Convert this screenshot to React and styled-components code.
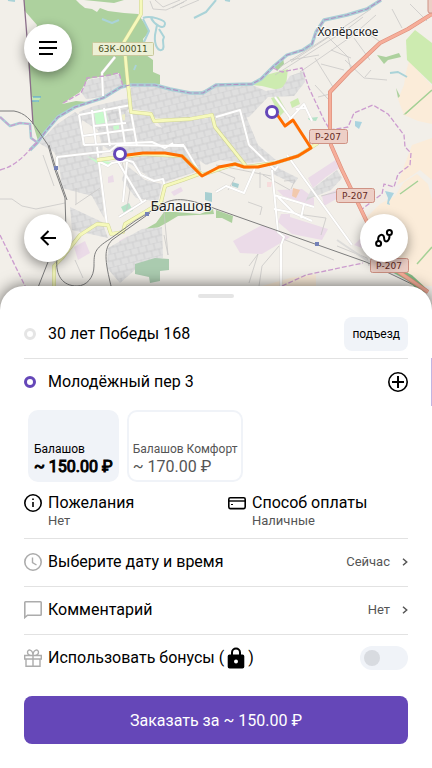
import React from "react";
import styled, { createGlobalStyle } from "styled-components";

const GlobalStyle = createGlobalStyle`
  * {
    box-sizing: border-box;
  }
  body {
    margin: 0;
    background: #fff;
    font-family: Roboto, "Noto Sans", sans-serif;
    color: #000;
  }
  button {
    font: inherit;
    color: inherit;
    cursor: pointer;
  }
`;

const forest = [
  "M24 0H76L80 4L85 8L92 9L97 12L100 8L108 11L124 13L138 14L147 27L149 32L143 39L146 55L153 60L153 72L160 75L160 84L122 86L119 73L108 77L104 76L88 79L85 84L80 92L62 104L76 101L88 102L72 108L58 117L46 131L38 141L33 124L28 58L37 25L24 10Z",
  "M84 0H124L114 3Z",
];

const meadow = [
  "M406 40L415 30L432 43V84L407 60Z",
  "M252 85L266 75L288 69L286 85L278 90L262 86Z",
  "M271 98L278 96L286 110L280 116Z",
  "M290 102L298 98L300 104L292 108Z",
];

const woods = [
  "M274 66L283 57L284 64L277 71Z",
  "M377 55L386 57L399 53L401 57L388 60L384 64Z",
  "M142 231L156 223L164 212L175 212L200 214L213 209L214 214L178 216L168 222L159 227L145 234Z",
  "M216 210L233 216L232 223L222 218L216 218Z",
  "M396 88L400 96L398 98ZM403 115L432 90L406 114Z",
];

const farmland = [
  "M409 61L432 86V124L418 121L404 115L398 99L404 85L406 72Z",
  "M412 145L432 138V180L420 170L404 181L397 185Z",
  "M404 182L417 174L428 184L432 200V286H412L388 268L372 242L364 220L380 204L395 196Z",
  "M262 286L290 278L316 274V290H250Z",
];

const industry = [
  "M308 178L337 159L339 168L326 177L313 188Z",
  "M322 196L336 190L338 198L324 206Z",
  "M233 241L262 225L290 237L284 241L262 254L240 253Z",
  "M290 217L328 229L322 240L292 234L278 222L281 214L290 214Z",
  "M277 190L302 189L314 198L314 206L283 196Z",
  "M74 247L85 241L90 253L78 260Z",
  "M119 241L128 236L134 247L123 253Z",
  "M108 177L113 175L114 182L108 183Z",
  "M171 192L181 187L183 191L174 196Z",
  "M354 245L361 238L362 248Z",
];

const town = [
  "M88 80L119 74L123 86L103 97L86 99L81 92Z",
  "M131 87L156 86L190 95L216 86L252 85L266 91L282 88L290 76L304 71L305 82L294 96L268 97L249 117L232 120L216 116L209 118L155 118L150 111L131 109Z",
  "M79 112L94 106L130 98L131 106L120 120L98 130L82 120Z",
  "M75 112L82 117L82 145L103 145L102 155L58 160L54 152L39 143L56 125Z",
  "M120 106L130 113L150 116L156 126L170 130L180 143L198 150L201 170L165 182L150 178L125 160L102 145L95 120Z",
  "M157 122L210 118L243 109L258 145L276 160L249 163L220 160L206 165L184 150L166 132Z",
  "M58 157L98 155L104 218L92 196L62 188Z",
  "M126 165L145 180L162 184L158 202L136 198L122 180Z",
  "M70 207L102 222L108 238L72 230Z",
  "M108 248L142 229L162 227L163 258L144 262L120 283L107 268Z",
  "M272 165L298 178L294 184L271 173Z",
  "M305 202L311 190L337 170L342 178L331 190L311 198Z",
];

const parks = [
  ["M94 110L106 109L108 122L96 125Z", "#c8facc"],
  ["M87 156L96 160L111 162L111 166L98 164Z", "#c8facc"],
  ["M113 126L119 124L119 129L114 130Z", "#c8facc"],
  ["M121 207L129 203L133 211L124 213Z", "#b5e3c8"],
  ["M308 118L318 117L316 121L309 120Z", "#b5e3c8"],
  ["M135 264L155 258L169 259V270L160 271V281L150 283L149 277L135 274Z", "#aacbaf"],
  ["M121 115L125 114L125 120L121 121Z", "#eeeeca"],
  ["M293 188L300 190L296 198L292 196Z", "#f2c9ad"],
  ["M267 182L272 182L271 187L267 187Z", "#f7dcdc"],
  ["M205 192L212 193L212 202L205 200Z", "#a8cfd1"],
  ["M232 182L239 184L238 188L232 186Z", "#a8cfd1"],
  ["M385 191L394 193L389 202L390 205L387 204L388 198Z", "#aad3df"],
  ["M355 121L362 122L359 129L355 126Z", "#aad3df"],
  ["M32 97L41 97L38 102L32 101Z", "#c6e8b4"],
];

const water = [
  "M143 18C150 15 166 20 165 24C164 31 154 24 151 18M157 25L155 35C154 46 159 53 163 49C165 44 161 42 164 37L159 29M143 19L149 31L144 42L138 56",
  "M102 19L112 23L119 20M194 18L206 12L216 0M134 70L136 65M390 73L398 72L407 77M8 0L15 1M225 0L230 1",
];

const lanes = [
  "M150 1L153 9L166 10L184 2M172 8L187 0M155 0L163 7L180 0M180 8L199 0",
  "M275 75L346 30L363 17M280 67L334 33M290 60L319 55M291 62L371 9M300 72L352 36L376 15M315 58L333 87M331 50L351 58M344 70L321 64M315 85L328 99M326 35L348 57L351 70M345 60L364 78L387 80M392 9L402 28M410 4L427 21M365 77L371 70M360 28L382 43M354 38L370 60M318 97L330 94",
  "M0 199L12 199L22 206L36 209L65 203M43 155L54 186M75 205L100 188M76 188L76 204M122 162L130 190L126 213M163 201L168 255L164 235M75 260L83 278",
  "M216 165L271 176M248 202L262 207L260 215M263 175L290 190M283 239L334 260M297 214L326 218L321 235M249 266L258 254L249 283M279 246L262 266L259 286M337 246L367 258L369 266",
  "M284 181L295 180L291 189M216 170L235 178L228 190M321 196L344 190M260 172V188",
];

const whiteRoads = [
  "M115 57L102 73L103 96M79 115L131 105M79 115L84 145M82 136L135 129M92 110L96 145M104 108L110 146M119 106L125 144M131 112L137 146M84 145L152 142L165 148L173 143M94 126L126 123",
  "M57 157L110 151L117 145L184 146L200 173M57 157L57 173M97 147L107 225M117 160L142 202M119 158L133 162L141 175L154 181L163 179L165 187M98 161L108 166L112 163L128 160M119 217L146 200M184 145L170 145M127 162L123 202",
  "M216 117L240 110L249 145M275 97L310 145M289 120L304 104L312 121M296 109L306 108M216 192L226 186L244 193L255 168M249 145L275 170L278 166M272 170L278 232L284 237L281 245V286M274 195L314 207M274 209L294 213L312 221M278 197L294 213M304 204L301 218M287 155L352 245",
];

const yellowRoads = [
  "M141 0V14L124 42L127 75L131 112L151 114L154 121L190 119L212 115L215 127L246 166",
  "M202 173L183 180L165 186L161 202L145 212L125 224L123 232L111 234L108 225L97 224L80 235L62 258L54 266V290",
  "M97 160L143 154L182 156L202 175L235 164L246 167L275 163L298 156L318 143",
];

const rails = [
  "M0 111L14 111C25 113 31 120 37 129L48 145L55 170L65 198L66 230M49 145L56 169L67 200",
  "M216 209C190 199 175 196 161 205L135 221L110 239C94 249 94 253 94 266C94 277 87 286 77 286C63 286 55 276 57 258M150 213L112 240C104 249 104 258 112 290M48 262L37 290",
  "M216 209L366 262L420 288",
];

const borders = [
  "M0 170C16 166 24 156 37 142",
  "M0 117L10 126L20 123L30 124L31 138L38 143",
  "M63 103L81 93L85 84L87 78L104 76L119 73L123 86",
  "M273 68L282 72L302 68L309 88L324 120L330 130L348 127L354 113L373 105L388 114L404 135L405 147L411 153L410 165L398 174L394 187L384 184L382 194L362 209",
  "M0 235L27 290M282 286L306 275L363 263",
];

const river =
  "M381 0L367 9L347 15L324 20L316 32L312 44L303 50L287 55L274 66L261 79L252 84L216 85L203 93L190 93L170 89L155 85L130 85L121 87L103 98L75 107L58 117L46 131L37 143L30 150";

const creek = "M0 117L10 126L20 123L30 124L31 138L38 143";

const highway =
  "M432 14L408 29L380 43L361 61L349 72L330 92V130L331 145L342 170L355 197L367 222L382 250L396 270L428 292";

const route =
  "M120 156L143 153L165 153L182 156L202 176L219 167L235 164L244 167L258 167L275 163L298 156L311 148L293 120L285 126L276 113";

const shields = [
  { x: 309, y: 129 },
  { x: 336, y: 188 },
  { x: 370, y: 258 },
];

const CityMap = () => (
  <MapCanvas viewBox="0 0 432 310" preserveAspectRatio="xMidYMin slice" aria-hidden="true">
    <defs>
      <pattern id="blocks" width="8" height="13" patternUnits="userSpaceOnUse" patternTransform="rotate(-14)">
        <path d="M0 0H8M2 0V7M6 7V13M0 7H8" fill="none" stroke="#c9c9ca" strokeWidth="0.7" />
      </pattern>
    </defs>
    <rect width="432" height="310" fill="#f2efe9" />
    {farmland.map((d) => <path key={d} d={d} fill="#fbecd9" />)}
    {forest.map((d) => <path key={d} d={d} fill="#add19e" />)}
    {meadow.map((d) => <path key={d} d={d} fill="#cdebb0" />)}
    {woods.map((d) => <path key={d} d={d} fill="#add19e" />)}
    {industry.map((d) => <path key={d} d={d} fill="#ebdbe8" />)}
    {town.map((d) => <path key={d} d={d} fill="#dfdfdf" />)}
    {town.map((d) => <path key={d} d={d} fill="url(#blocks)" />)}
    {parks.map(([d, fill]) => <path key={d} d={d} fill={fill} />)}
    <g fill="none" strokeLinejoin="round">
      {water.map((d) => <path key={d} d={d} stroke="#aad3d8" strokeWidth="2" />)}
      <path d="M33 97H41M32 101H39" stroke="#4b9fe0" />
      <path d={river} stroke="#a9ced6" strokeWidth="3.4" />
      <path d={creek} stroke="#a9ced6" strokeWidth="2.6" />
      {lanes.map((d) => <path key={d} d={d} stroke="#c9c8c6" strokeWidth="0.8" />)}
      <path d="M400 194L418 181M417 264L432 247M405 114L432 90" stroke="#a5d196" strokeWidth="1.5" />
      {whiteRoads.map((d) => <path key={d} d={d} stroke="#dcdad7" strokeWidth="2.8" />)}
      {whiteRoads.map((d) => <path key={d} d={d} stroke="#fff" strokeWidth="2" />)}
      <path d="M337 240L375 266L420 286" stroke="#dddcda" strokeWidth="2" />
      {yellowRoads.map((d) => <path key={d} d={d} stroke="#cfd394" strokeWidth="3.8" />)}
      {yellowRoads.map((d) => <path key={d} d={d} stroke="#f6f9bb" strokeWidth="2.8" />)}
      <path d={river} stroke="#b08fc2" strokeWidth="1.1" strokeDasharray="5 2" />
      {borders.map((d) => (
        <path key={d} d={d} stroke="#cc9ccf" strokeWidth="1.3" strokeDasharray="5 2" />
      ))}
      <path d="M24 0L29 62L33 124" stroke="#8c6f8b" strokeWidth="1.3" />
      {rails.map((d) => <path key={d} d={d} stroke="#7d7d7d" strokeWidth="1" />)}
      <path d="M384 264L410 278L425 292" stroke="#80b883" strokeWidth="7" />
      <path d={highway} stroke="#dc8d7a" strokeWidth="4" />
      <path d={highway} stroke="#f6ae9a" strokeWidth="2.8" />
    </g>
    <g fill="#7481b8">
      <rect x="54" y="166" width="4" height="4" />
      <rect x="145" y="212" width="4" height="4" />
      <rect x="315" y="242" width="4" height="4" />
    </g>
    <MapLabel x="348" y="36" $size={12}>Хопёрское</MapLabel>
    <MapLabel x="181" y="211" $size={14}>Балашов</MapLabel>
    <rect x="92.5" y="42.5" width="61" height="13" rx="1" fill="#edf0d6" stroke="#c9c89c" />
    <ShieldText x="123" y="52" fill="#49501f">63К-00011</ShieldText>
    <rect x="428" y="-2" width="30" height="15" rx="2" fill="#edcfc6" stroke="#cf9284" />
    {shields.map(({ x, y }) => (
      <g key={x}>
        <rect x={x + 0.5} y={y + 0.5} width="38" height="14" rx="2" fill="#edcfc6" stroke="#cf9284" />
        <ShieldText x={x + 19} y={y + 11} fill="#672b24">Р-207</ShieldText>
      </g>
    ))}
    <g fill="none" strokeLinejoin="round">
      <path d={route} stroke="#ff6d00" strokeWidth="3" />
      <circle cx="120" cy="154" r="5.5" fill="#fff" stroke="#6547b8" strokeWidth="3" />
      <circle cx="272" cy="112" r="5.5" fill="#fff" stroke="#6547b8" strokeWidth="3" />
    </g>
  </MapCanvas>
);

const MenuIcon = () => (
  <Icon $size={24} viewBox="0 0 24 24">
    <path d="M3 6H21M3 12H21M3 18H17" strokeWidth="2" />
  </Icon>
);

const BackIcon = () => (
  <Icon $size={24} viewBox="0 0 24 24">
    <path d="M20 12H6M12.500 5L5.500 12L12.500 19" strokeWidth="2" />
  </Icon>
);

const RouteIcon = () => (
  <Icon $size={24} viewBox="0 0 24 24">
    <circle cx="6.6" cy="17.4" r="2.5" strokeWidth="2" />
    <circle cx="17.4" cy="6.4" r="2.5" strokeWidth="2" />
    <path d="M6.3 15C5.200 8.500 11.200 7 12 11.200C12.400 13.800 12 15.400 14 15.400C16.800 15.400 17.600 12 17.500 9" strokeWidth="2" />
  </Icon>
);

const AddIcon = () => (
  <Icon $size={20} viewBox="0 0 20 20">
    <circle cx="10" cy="10" r="9.2" strokeWidth="1.6" />
    <path d="M10 4V16M4 10H16" strokeWidth="2" />
  </Icon>
);

const InfoIcon = () => (
  <Icon $size={18} viewBox="0 0 18 18">
    <circle cx="9" cy="9" r="8.2" strokeWidth="1.6" />
    <path d="M9 8V13M9 4.500V6" strokeWidth="1.6" />
  </Icon>
);

const CardIcon = () => (
  <Icon $size={18} viewBox="0 0 18 18">
    <rect x="0.8" y="3.8" width="16.4" height="10.800" rx="1.500" strokeWidth="1.6" />
    <path d="M1 7H17" strokeWidth="1.4" />
    <path d="M3 10.500H5" strokeWidth="1" />
  </Icon>
);

const ClockIcon = () => (
  <Icon $size={18} viewBox="0 0 18 18" $color="#acacac">
    <circle cx="9" cy="9" r="8.2" strokeWidth="1.6" />
    <path d="M8.500 4.500V9.500L12.500 12" strokeWidth="1.4" />
  </Icon>
);

const CommentIcon = () => (
  <Icon $size={18} viewBox="0 0 18 18" $color="#acacac">
    <path d="M0.8 16.500V1.500Q0.8 0.8 1.500 0.8H16.500Q17.2 0.8 17.2 1.500V13.500Q17.2 14.200 16.500 14.200H3.500Z" strokeWidth="1.6" />
  </Icon>
);

const GiftIcon = () => (
  <Icon $size={18} viewBox="0 0 18 18" $color="#acacac">
    <path d="M0.700 6.500H17.300V10H0.700ZM2 10V17.300H16V10M9 6.500V17.300M9 6.500C6.500 6.500 3.500 5.500 3.500 3.200C3.500 0 8.500 0 9 6C9.500 0 14.500 0 14.500 3.200C14.500 5.500 11.500 6.500 9 6.500" strokeWidth="1.4" />
  </Icon>
);

const LockIcon = () => (
  <Icon $size={24} viewBox="0 0 24 24">
    <path d="M8 9V6.500A4 4 0 0 1 16 6.500V9" strokeWidth="2" />
    <path d="M5.500 8.500H18.500A1.800 1.800 0 0 1 20.300 10.300V20.700A1.800 1.800 0 0 1 18.500 22.500H5.500A1.800 1.800 0 0 1 3.700 20.700V10.300A1.800 1.800 0 0 1 5.500 8.500Z" fill="#000" stroke="none" />
    <circle cx="12" cy="15.500" r="2" fill="#fff" stroke="none" />
  </Icon>
);

const Chevron = () => (
  <Icon $size={6} viewBox="0 0 6 8" $color="#555">
    <path d="M1 0.800L4.700 4L1 7.200" strokeWidth="1.5" />
  </Icon>
);

export default function App() {
  return (
    <Page>
      <GlobalStyle />
      <MapArea>
        <CityMap />
        <RoundButton aria-label="Меню"><MenuIcon /></RoundButton>
        <MapActions>
          <RoundButton aria-label="Назад"><BackIcon /></RoundButton>
          <RoundButton aria-label="Маршрут"><RouteIcon /></RoundButton>
        </MapActions>
      </MapArea>

      <Sheet>
        <Handle />
        <Row>
          <Dot $color="#e5e5e5" />
          <RowTitle>30 лет Победы 168</RowTitle>
          <Entrance>подъезд</Entrance>
        </Row>
        <Row $line>
          <Dot $color="#6547b8" />
          <RowTitle>Молодёжный пер 3</RowTitle>
          <PlainButton aria-label="Добавить адрес"><AddIcon /></PlainButton>
          <EdgeMark />
        </Row>

        <Tariffs>
          <Tariff $active aria-pressed="true">
            <TariffName>Балашов</TariffName>
            <TariffPrice $active>~ 150.00 ₽</TariffPrice>
          </Tariff>
          <Tariff aria-pressed="false">
            <TariffName>Балашов Комфорт</TariffName>
            <TariffPrice>~ 170.00 ₽</TariffPrice>
          </Tariff>
        </Tariffs>

        <Options>
          <Option>
            <InfoIcon />
            <OptionTitle>Пожелания</OptionTitle>
            <OptionValue>Нет</OptionValue>
          </Option>
          <Option>
            <CardIcon />
            <OptionTitle>Способ оплаты</OptionTitle>
            <OptionValue>Наличные</OptionValue>
          </Option>
        </Options>

        <RowButton $line>
          <ClockIcon />
          <RowTitle>Выберите дату и время</RowTitle>
          <RowValue>Сейчас</RowValue>
          <Chevron />
        </RowButton>
        <RowButton $line>
          <CommentIcon />
          <RowTitle>Комментарий</RowTitle>
          <RowValue>Нет</RowValue>
          <Chevron />
        </RowButton>
        <Row $line>
          <GiftIcon />
          <BonusLabel htmlFor="bonus">
            Использовать бонусы (<LockIcon />)
          </BonusLabel>
          <Toggle id="bonus" type="checkbox" role="switch" />
        </Row>

        <OrderButton>Заказать за ~ 150.00 ₽</OrderButton>
      </Sheet>
    </Page>
  );
}

const Page = styled.main`
  display: flex;
  flex-direction: column;
  min-height: 100vh;
  overflow: hidden;
`;

const MapArea = styled.section`
  position: relative;
  flex: 1;
  min-height: 240px;
  display: flex;
  flex-direction: column;
  align-items: flex-start;
  justify-content: space-between;
  padding: 24px;
`;

/* runs on under the rounded corners of the sheet */
const MapCanvas = styled.svg`
  position: absolute;
  top: 0;
  left: 0;
  width: 100%;
  height: calc(100% + 24px);
`;

const MapLabel = styled.text`
  font-family: "Noto Sans", sans-serif;
  font-size: ${(p) => p.$size}px;
  text-anchor: middle;
  fill: #222;
  stroke: #fff;
  stroke-opacity: 0.7;
  stroke-width: 2px;
  paint-order: stroke;
`;

const ShieldText = styled.text`
  font-family: "DejaVu Sans", sans-serif;
  font-size: 9px;
  text-anchor: middle;
`;

const MapActions = styled.div`
  display: flex;
  justify-content: space-between;
  width: 100%;
`;

const RoundButton = styled.button`
  position: relative;
  display: flex;
  align-items: center;
  justify-content: center;
  width: 48px;
  height: 48px;
  padding: 0;
  border: none;
  border-radius: 50%;
  background: #fff;
  box-shadow: 0 4px 12px rgba(0, 0, 0, 0.4);
`;

const Icon = styled.svg`
  flex: none;
  width: ${(p) => p.$size}px;
  height: ${(p) => (p.$size === 6 ? 8 : p.$size)}px;
  fill: none;
  stroke: ${(p) => p.$color || "#000"};
`;

const Sheet = styled.section`
  position: relative;
  display: flex;
  flex-direction: column;
  padding: 8px 24px 24px;
  border-radius: 24px 24px 0 0;
  background: #fff;
  box-shadow: 0 0 16px rgba(0, 0, 0, 0.6);
`;

const Handle = styled.div`
  align-self: center;
  width: 36px;
  height: 4px;
  margin-bottom: 12px;
  border-radius: 2px;
  background: #e5e5e5;
`;

const Row = styled.div`
  position: relative;
  display: flex;
  align-items: center;
  width: 100%;
  height: 48px;
  box-shadow: ${(p) => (p.$line ? "inset 0 1px #e2e2e2" : "none")};
`;

const RowButton = styled(Row).attrs({ as: "button" })`
  padding: 0;
  border: none;
  background: none;
  text-align: left;
`;

const Dot = styled.span`
  width: 12px;
  height: 12px;
  margin-right: 6px;
  border: 3px solid ${(p) => p.$color};
  border-radius: 50%;
`;

const RowTitle = styled.span`
  flex: 1;
  margin-left: 6px;
  font-size: 16px;
  line-height: 20px;
`;

const RowValue = styled.span`
  margin-right: 12px;
  font-size: 13px;
  line-height: 16px;
  color: #555;
`;

const Entrance = styled.button`
  height: 34px;
  padding: 0 8px;
  border: none;
  border-radius: 8px;
  background: #f0f3f8;
  font-size: 12px;
`;

const PlainButton = styled.button`
  display: flex;
  padding: 0;
  border: none;
  background: none;
`;

const EdgeMark = styled.span`
  position: absolute;
  top: 0;
  right: -24px;
  width: 1px;
  height: 48px;
  background: #c1b5e3;
`;

const Tariffs = styled.div`
  display: flex;
  gap: 8px;
  padding: 4px 4px 0;
`;

const Tariff = styled.button`
  display: flex;
  flex-direction: column;
  justify-content: flex-end;
  height: 72px;
  padding: 4px 4px 3px;
  border: 2px solid #f0f3f8;
  border-radius: 10px;
  background: ${(p) => (p.$active ? "#f0f3f8" : "#fff")};
  color: ${(p) => (p.$active ? "#000" : "#555")};
  text-align: left;
`;

const TariffName = styled.span`
  font-size: 12px;
  line-height: 16px;
`;

const TariffPrice = styled.span`
  font-size: 16px;
  line-height: 20px;
  -webkit-text-stroke: ${(p) => (p.$active ? "1px" : "0")};
`;

const Options = styled.div`
  display: grid;
  grid-template-columns: 1fr 1fr;
  column-gap: 24px;
  padding: 11px 0 9px;
`;

const Option = styled.button`
  display: grid;
  grid-template-columns: 18px 1fr;
  column-gap: 6px;
  align-items: center;
  padding: 0;
  border: none;
  background: none;
  text-align: left;
`;

const OptionTitle = styled.span`
  font-size: 16px;
  line-height: 20px;
`;

const OptionValue = styled.span`
  grid-column: 2;
  font-size: 13px;
  line-height: 16px;
  color: #555;
`;

const BonusLabel = styled.label`
  display: flex;
  flex: 1;
  align-items: center;
  margin-left: 6px;
  font-size: 16px;
  line-height: 20px;
`;

const Toggle = styled.input`
  appearance: none;
  width: 48px;
  height: 24px;
  margin: 0;
  padding: 4px;
  border-radius: 12px;
  background: #f0f3f8;
  cursor: pointer;
  &::before {
    content: "";
    display: block;
    width: 16px;
    height: 16px;
    border-radius: 50%;
    background: #d8dbe0;
  }
  &:checked::before {
    margin-left: auto;
    background: #6547b8;
  }
`;

const OrderButton = styled.button`
  height: 48px;
  margin-top: 14px;
  border: none;
  border-radius: 8px;
  background: #6547b8;
  color: #fff;
  font-size: 16px;
`;
